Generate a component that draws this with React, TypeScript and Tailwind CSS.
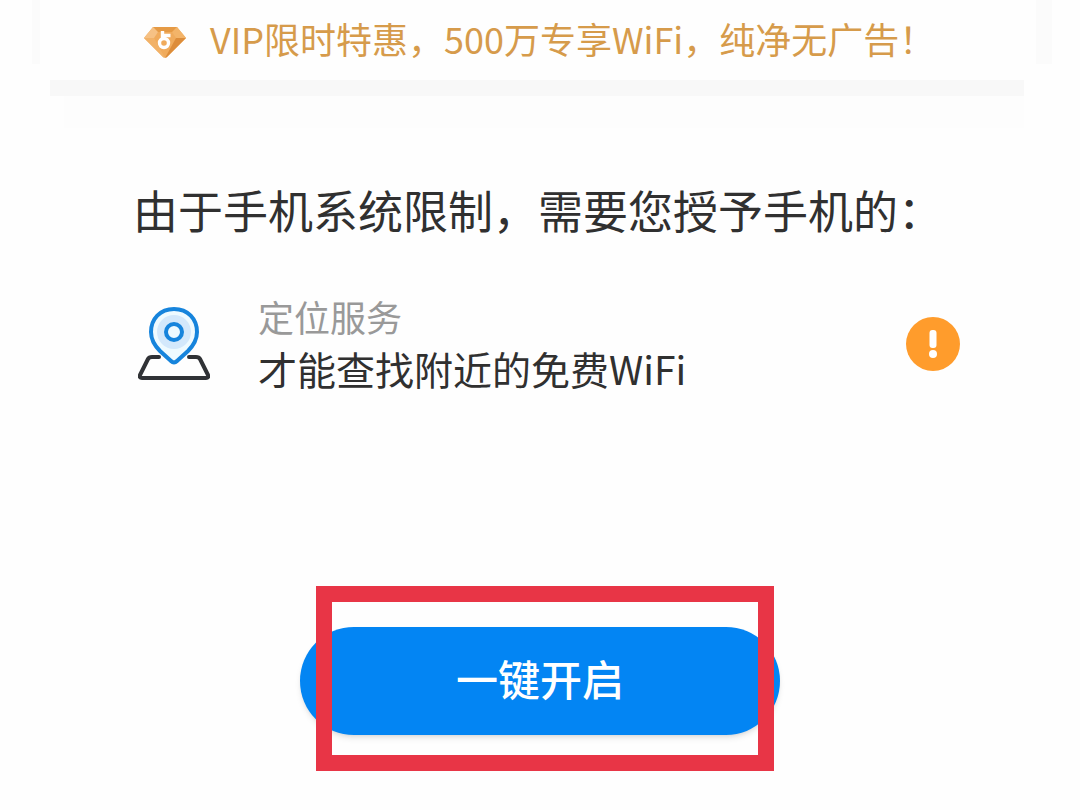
function DiamondIcon() {
  return (
    <svg viewBox="0 -8 42 40" className="w-[42px] h-10 shrink-0" aria-hidden="true">
      <path d="M9 1h24l9 11-19 19q-2 1-4 0L0 12z" fill="#f0ab5c" />
      <path d="M9 1h24l-4 5H13z" fill="#e59a45" />
      <path d="M9 1 0 12h10l4-6z" fill="#f6c184" />
      <path d="M33 1l9 11H32l-4-6z" fill="#f3b469" />
      <path d="M0 12h10l11 20q-1 0-2-1z" fill="#f2b268" />
      <path d="M42 12H32L21 32q1 0 2-1z" fill="#dd8d3b" />
      <circle cx="20" cy="17" r="4.5" fill="none" stroke="#fff" strokeWidth="3.4" />
      <path d="M18.500 13V5m0 4.500h8" fill="none" stroke="#fff" strokeWidth="3.400" />
    </svg>
  );
}

function LocationIcon() {
  return (
    <svg
      viewBox="0 0 72 74"
      className="w-[72px] h-[74px] shrink-0"
      fill="none"
      strokeLinecap="round"
      strokeLinejoin="round"
      aria-hidden="true"
    >
      <path
        d="M21 50h-7q-3 0-4 2L2 68q-1 3 2 3h64q3 0 2-3l-8-16q-1-2-4-2h-7"
        stroke="#303236"
        strokeWidth="4"
      />
      <path
        d="M36 2C22 2 13 12 13 25c0 8 4 14 9 19l11 10q3 3 6 0l11-10c5-5 9-11 9-19C59 12 50 2 36 2z"
        fill="#eefaff"
        stroke="#1684dc"
        strokeWidth="4"
      />
      <circle cx="36" cy="25" r="17" fill="#d3e8fb" />
      <circle cx="36" cy="25" r="8" fill="#eefaff" stroke="#1684dc" strokeWidth="4" />
    </svg>
  );
}

function WarningIcon() {
  return (
    <svg viewBox="0 0 54 54" className="size-[54px] shrink-0" role="img" aria-label="未开启">
      <circle cx="27" cy="27" r="27" fill="#ff9c2c" />
      <rect x="23.500" y="13" width="7" height="18" rx="3" fill="#fff" />
      <circle cx="27" cy="37" r="4" fill="#fff" />
    </svg>
  );
}

export default function App() {
  return (
    <div className="min-h-screen bg-[#fefefe] font-['Noto_Sans_CJK_SC',sans-serif] text-[#303030]">
      <header className="flex justify-between h-20">
        <div className="w-2 h-16 ml-8 bg-[#fbfbfb]" />
        <a href="#vip" className="flex-1 flex items-center gap-6 pl-[104px] pb-1 text-[#d69b4b]">
          <DiamondIcon />
          <span className="text-[36px] leading-[52px] whitespace-nowrap">
            VIP限时特惠，500万专享WiFi，纯净无广告！
          </span>
        </a>
        <div className="w-4 h-16 mr-7 bg-[#fbfbfb]" />
      </header>
      <div className="h-4 ml-[50px] mr-14 bg-[#f8f8f8]" />
      <div className="h-8 ml-16 mr-14 bg-[#fdfdfd]" />

      <main className="pt-12">
        <h1 className="pl-[133px] text-[45px] leading-[68px] whitespace-nowrap">
          由于手机系统限制，需要您授予手机的：
        </h1>
        <section className="flex items-center mt-[46px] pl-[138px] pr-[120px]">
          <LocationIcon />
          <div className="flex-1 pl-12 pb-1">
            <h2 className="text-[36px] leading-[52px] text-[#999999]">定位服务</h2>
            <p className="text-[39px] leading-[52px]">才能查找附近的免费WiFi</p>
          </div>
          <WarningIcon />
        </section>

        <div className="relative w-[480px] mx-auto mt-[229px]">
          <button
            type="button"
            className="block w-full h-[108px] pb-2 rounded-full bg-[#0385f3] text-white text-[42px] font-medium shadow-md cursor-pointer"
          >
            一键开启
          </button>
          <div className="absolute -top-[41px] -bottom-9 left-4 right-1.5 border-16 border-[#e83546] pointer-events-none" />
        </div>
      </main>
    </div>
  );
}
